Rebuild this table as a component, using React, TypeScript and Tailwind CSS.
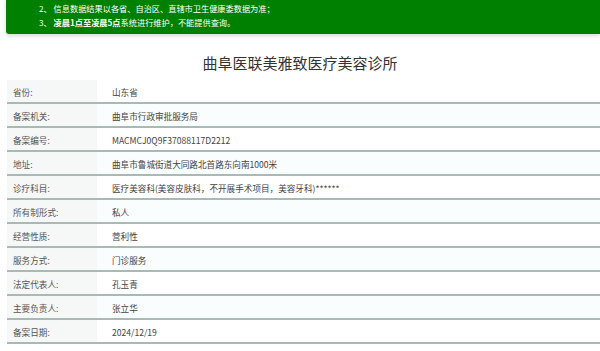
import React from "react";

const rows: [string, string][] = [
  ["省份:", "山东省"],
  ["备案机关:", "曲阜市行政审批服务局"],
  ["备案编号:", "MACMCJ0Q9F37088117D2212"],
  ["地址:", "曲阜市鲁城街道大同路北首路东向南1000米"],
  ["诊疗科目:", "医疗美容科(美容皮肤科，不开展手术项目，美容牙科)******"],
  ["所有制形式:", "私人"],
  ["经营性质:", "营利性"],
  ["服务方式:", "门诊服务"],
  ["法定代表人:", "孔玉青"],
  ["主要负责人:", "张立华"],
  ["备案日期:", "2024/12/19"],
];

export default function App() {
  return (
    <div
      className="w-[600px] h-[351px] overflow-hidden bg-white"
      style={{ fontFamily: '"Noto Sans CJK SC", "Noto Sans", sans-serif' }}
    >
      <div className="ml-[6px] h-[34px] bg-[#008000] rounded-bl-[3px] shadow-[0_2px_4px_rgba(0,0,0,0.15)] pl-[33px] pt-[1px] text-white text-[8.2px] leading-[14px]">
        <p>2、 信息数据结果以各省、自治区、直辖市卫生健康委数据为准；</p>
        <p>
          3、 <span className="font-bold">凌晨1点至凌晨5点</span>系统进行维护，不能提供查询。
        </p>
      </div>
      <h1 className="mt-[19px] mb-[7px] text-center text-[15px] leading-[20px] text-[#333]">
        曲阜医联美雅致医疗美容诊所
      </h1>
      <div className="ml-[7px] flex flex-col">
        {rows.map(([label, value], i) => (
          <div
            key={label}
            className={`flex h-[24px] border-b-2 border-[#a9bab5] text-[8.6px] ${
              i % 2 === 1 ? "bg-[#fafdfd]" : "bg-white"
            }`}
          >
            <div className="w-[90px] bg-[#f6f7f7] pl-[6px] flex items-center pt-[2px] text-[#555]">
              {label}
            </div>
            <div className="pl-[15px] flex items-center pt-[2px] text-[#444]">{value}</div>
          </div>
        ))}
      </div>
    </div>
  );
}
